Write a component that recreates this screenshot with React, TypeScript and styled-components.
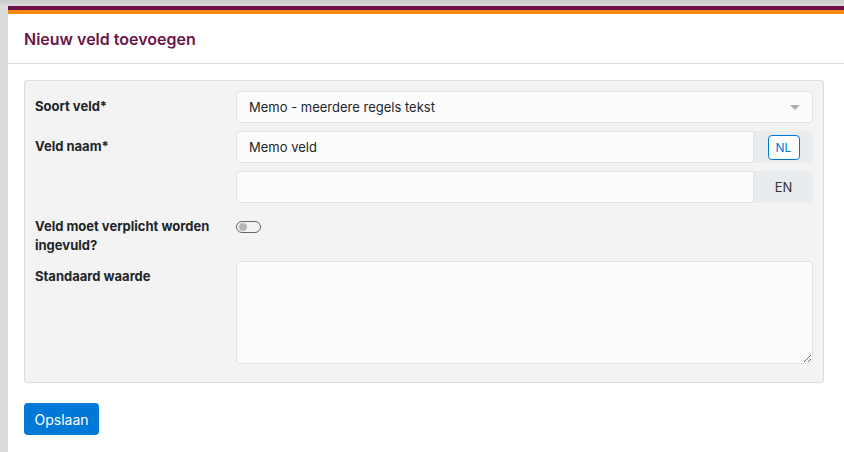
import styled, { createGlobalStyle } from 'styled-components'

export default function App() {
  return (
    <>
      <GlobalStyle />
      <Dialog>
        <Stripe />
        <Header>
          <Title>Nieuw veld toevoegen</Title>
        </Header>
        <Body>
          <Panel>
            <Row>
              <Label>Soort veld*</Label>
              <SelectBox>
                Memo - meerdere regels tekst
                <Caret />
              </SelectBox>
            </Row>
            <Row>
              <Label>Veld naam*</Label>
              <Stack>
                <InputGroup>
                  <TextInput defaultValue='Memo veld' />
                  <Addon>
                    <LangButton $active>NL</LangButton>
                  </Addon>
                </InputGroup>
                <InputGroup>
                  <TextInput defaultValue='' />
                  <Addon>
                    <LangButton>EN</LangButton>
                  </Addon>
                </InputGroup>
              </Stack>
            </Row>
            <Row>
              <Label>Veld moet verplicht worden ingevuld?</Label>
              <div>
                <Toggle>
                  <Knob />
                </Toggle>
              </div>
            </Row>
            <Row $tight>
              <Label>Standaard waarde</Label>
              <TextArea />
            </Row>
          </Panel>
          <SaveButton>Opslaan</SaveButton>
        </Body>
      </Dialog>
    </>
  )
}

const GlobalStyle = createGlobalStyle`
  html, body {
    margin: 0;
    padding: 0;
    height: 100%;
    overflow: hidden;
  }
  body {
    background: linear-gradient(180deg, #c9c9c9 0px, #dcdcdc 6px, #dcdcdc 100%);
    font-family: Inter, 'Liberation Sans', Arial, sans-serif;
    color: #212529;
  }
`

const Dialog = styled.div`
  margin: 6px 0 0 8px;
  height: 446px;
  background: #fff;
  display: flex;
  flex-direction: column;
`

const Stripe = styled.div`
  height: 4px;
  background: #6d1148;
  border-bottom: 4px solid #f68a0f;
`

const Header = styled.div`
  height: 49px;
  display: flex;
  align-items: center;
  padding: 0 16px;
  border-bottom: 1px solid #dedede;
`

const Title = styled.h1`
  margin: 0;
  font-size: 16px;
  font-weight: 600;
  color: #6b1548;
`

const Body = styled.div`
  padding: 16px 20px 0 16px;
`

const Panel = styled.div`
  background: #f3f3f3;
  border: 1px solid #dcdcdc;
  border-radius: 3px;
  padding: 10px 10px 18px;
  display: flex;
  flex-direction: column;
  gap: 8px;
`

const Row = styled.div<{ $tight?: boolean }>`
  display: grid;
  grid-template-columns: 201px 1fr;
  margin-top: ${p => (p.$tight ? '-2px' : '0')};
`

const Label = styled.div`
  font-size: 13px;
  font-weight: 700;
  line-height: 19px;
  padding: 6px 10px 0 0;
  color: #212529;
`

const fieldBase = `
  box-sizing: border-box;
  height: 32px;
  background: #fcfcfc;
  border: 1px solid #e2e2e2;
  border-radius: 4px;
  font-family: Inter, 'Liberation Sans', Arial, sans-serif;
  font-size: 13px;
  color: #212529;
  padding: 0 12px;
`

const SelectBox = styled.div`
  ${fieldBase}
  position: relative;
  display: flex;
  align-items: center;
`

const Caret = styled.span`
  position: absolute;
  right: 12px;
  top: 13px;
  width: 0;
  height: 0;
  border-left: 5px solid transparent;
  border-right: 5px solid transparent;
  border-top: 5px solid #adadad;
`

const Stack = styled.div`
  display: flex;
  flex-direction: column;
  gap: 8px;
`

const InputGroup = styled.div`
  display: flex;
`

const TextInput = styled.input`
  ${fieldBase}
  flex: 1;
  min-width: 0;
  border-radius: 4px 0 0 4px;
  outline: none;
`

const Addon = styled.div`
  width: 59px;
  height: 32px;
  background: #e9ecef;
  border-radius: 0 4px 4px 0;
  display: flex;
  align-items: center;
  justify-content: center;
`

const LangButton = styled.button<{ $active?: boolean }>`
  box-sizing: border-box;
  width: 32px;
  height: 25px;
  padding: 0;
  border-radius: 4px;
  border: 1px solid ${p => (p.$active ? '#0078d7' : 'transparent')};
  background: ${p => (p.$active ? '#fff' : 'transparent')};
  color: ${p => (p.$active ? '#0078d7' : '#333')};
  font-family: Inter, 'Liberation Sans', Arial, sans-serif;
  font-size: ${p => (p.$active ? '12px' : '13px')};
  cursor: pointer;
`

const Toggle = styled.div`
  box-sizing: border-box;
  margin-top: 10px;
  width: 25px;
  height: 12px;
  border: 1px solid #666;
  border-radius: 6px;
  background: #f3f3f3;
  position: relative;
`

const Knob = styled.span`
  position: absolute;
  left: 2px;
  top: 1px;
  width: 8px;
  height: 8px;
  border-radius: 50%;
  background: #b5b5b5;
`

const TextArea = styled.textarea`
  ${fieldBase}
  height: 103px;
  padding: 8px 12px;
  resize: vertical;
  outline: none;
`

const SaveButton = styled.button`
  margin-top: 20px;
  width: 75px;
  height: 32px;
  border: none;
  border-radius: 4px;
  background: #0078d7;
  color: #fff;
  font-family: Inter, 'Liberation Sans', Arial, sans-serif;
  font-size: 14px;
  cursor: pointer;
`
